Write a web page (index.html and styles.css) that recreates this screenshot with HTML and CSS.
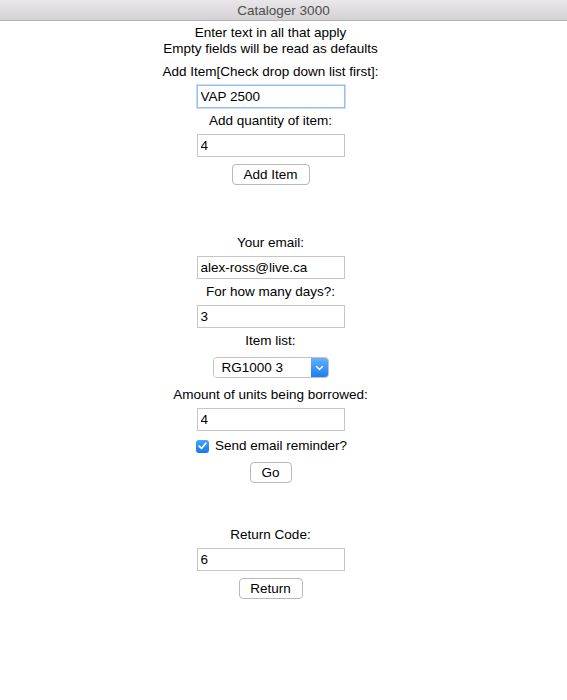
FILE: index.html
```html
<!DOCTYPE html>
<html lang="en">
<head>
<meta charset="UTF-8">
<meta name="viewport" content="width=device-width, initial-scale=1.0">
<title>Cataloger 3000</title>
<link rel="stylesheet" href="styles.css">
</head>
<body>

<div class="titlebar">Cataloger 3000</div>

<div class="form">
    <p class="intro">Enter text in all that apply<br>Empty fields will be read as defaults</p>

    <label class="first">Add Item[Check drop down list first]:</label>
    <input type="text" class="field focused" id="item" value="VAP 2500">
    <label>Add quantity of item:</label>
    <input type="text" class="field" id="quantity" value="4">
    <button class="btn btn-add">Add Item</button>

    <label class="section">Your email:</label>
    <input type="text" class="field" id="email" value="alex-ross@live.ca">
    <label>For how many days?:</label>
    <input type="text" class="field" id="days" value="3">
    <label>Item list:</label>
    <div class="select-box">
        <select class="select" id="itemList">
            <option>RG1000 3</option>
            <option>VAP 2500 4</option>
        </select>
        <span class="select-arrow">
            <svg width="9" height="6" viewBox="0 0 9 6"><path d="M1.5 1.5 L4.5 4.5 L7.5 1.5" fill="none" stroke="#fff" stroke-width="1.4" stroke-linecap="round" stroke-linejoin="round"/></svg>
        </span>
    </div>
    <label class="after-select">Amount of units being borrowed:</label>
    <input type="text" class="field" id="units" value="4">
    <label class="check-row">
        <span class="checkbox">
            <svg width="9" height="8" viewBox="0 0 9 8"><path d="M1.2 4.2 L3.5 6.5 L7.8 1.2" fill="none" stroke="#fff" stroke-width="1.7" stroke-linecap="round" stroke-linejoin="round"/></svg>
        </span>
        Send email reminder?
    </label>
    <button class="btn btn-go">Go</button>

    <label class="section-return">Return Code:</label>
    <input type="text" class="field" id="code" value="6">
    <button class="btn btn-return">Return</button>
</div>

</body>
</html>
```

FILE: styles.css
```css
body { margin: 0; background: #fff; font-family: "Liberation Sans", Arial, sans-serif; font-size: 13.5px; color: #000; }
.titlebar { height: 20px; line-height: 21px; text-align: center; color: #4d4d4d; background: linear-gradient(#e9e7e9, #d3d1d3); border-bottom: 1px solid #b4b2b4; }
.form { width: 541px; display: flex; flex-direction: column; align-items: center; gap: 5px; padding-top: 4px; }
.intro { margin: 0; text-align: center; line-height: 16px; }
label { display: block; line-height: 16px; text-align: center; }
.first { margin-top: 2px; }
.field { width: 148px; height: 23px; box-sizing: border-box; border: 1px solid #c6c6c6; padding: 0 3px; font: 13.5px "Liberation Sans", Arial, sans-serif; color: #000; outline: none; }
.focused { border-color: #97bfee; box-shadow: 0 0 0 1px #c9def6; }
.btn { height: 21px; box-sizing: border-box; padding: 0; white-space: nowrap; background: #fff; border: 1px solid #b8b8b8; border-radius: 4px; font: 13.5px "Liberation Sans", Arial, sans-serif; color: #000; }
.btn-add { width: 78px; margin-top: 2px; }
.btn-go { width: 42px; margin-top: 3px; }
.btn-return { width: 64px; margin-top: 2px; }
.section { margin-top: 45px; }
.section-return { margin-top: 39px; }
.select-box { display: flex; width: 116px; height: 21px; box-sizing: border-box; margin-top: 3px; border: 1px solid #c2c2c2; border-radius: 4px; overflow: hidden; background: #fff; }
.select { flex: 1; min-width: 0; appearance: none; -webkit-appearance: none; border: none; background: #fff; padding: 0 0 0 8px; font: 13.5px "Liberation Sans", Arial, sans-serif; color: #000; outline: none; }
.select-arrow { width: 17px; display: flex; align-items: center; justify-content: center; background: linear-gradient(#67b1fb, #1a7ef3); }
.after-select { margin-top: 4px; }
.check-row { display: flex; align-items: center; gap: 6px; margin-top: 2px; padding-left: 2px; }
.checkbox { width: 13px; height: 13px; border-radius: 3px; background: linear-gradient(#4aa3fb, #1577f2); display: flex; align-items: center; justify-content: center; }
```
